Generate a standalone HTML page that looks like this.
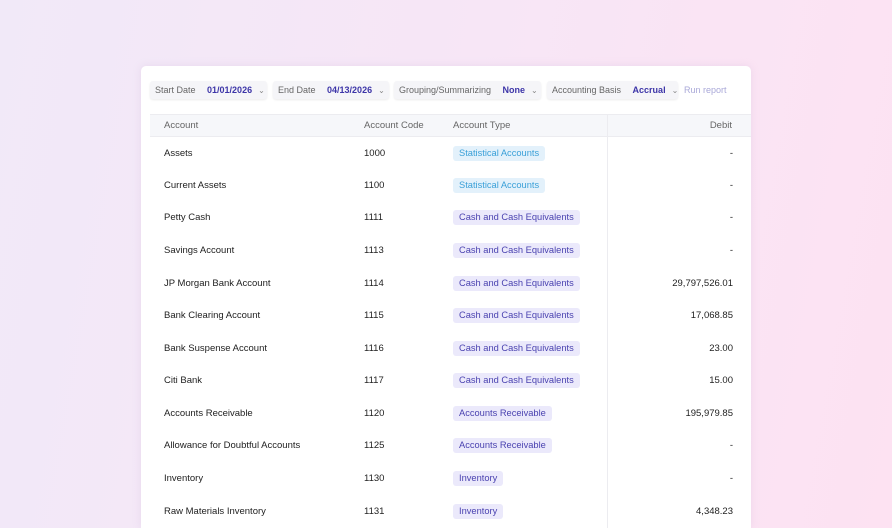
<!DOCTYPE html>
<html><head><style>
*{margin:0;padding:0;box-sizing:border-box}
html,body{width:892px;height:528px;overflow:hidden}
body{font-family:"Liberation Sans",sans-serif;background:linear-gradient(100deg,#f1e9f8 0%,#f7e6f6 50%,#fde2f2 100%);position:relative}
.card{position:absolute;left:141px;top:66px;width:610px;height:462px;background:#fff;border-radius:5px 5px 0 0;box-shadow:0 0 8px rgba(200,170,210,.25)}
.f{position:absolute;top:81px;height:18px;background:#f5f5f8;border-radius:3px;font-size:9px;color:#666;line-height:18px;padding-left:5px;white-space:nowrap;box-shadow:0 1px 2px rgba(0,0,0,.08)}
.f b{color:#3d35a8;font-weight:bold;margin-left:9px}
.f i{font-style:normal;color:#888;margin-left:6px;font-size:8px}
.run{position:absolute;left:684px;top:81px;line-height:18px;font-size:9px;color:#a9a8d8;white-space:nowrap}
.hd{position:absolute;left:150px;top:114px;width:601px;height:23px;background:#f6f7fa;border-top:1px solid #ececf0;border-bottom:1px solid #ececf0}
.vl{position:absolute;left:607px;top:114px;width:1px;height:420px;background:#ececf0}
.t{position:absolute;font-size:9.5px;color:#222;white-space:nowrap}
.h{color:#666;top:120px}
.bd{position:absolute;left:453px;height:15px;line-height:15px;padding:0 6px;border-radius:3px;font-size:9.3px;background:#ebe9fb;color:#4a42b0;white-space:nowrap}
.bd.s{background:#e3f1fb;color:#3aa0d8}
.num{position:absolute;right:159px;font-size:9.5px;color:#222}
</style></head><body>
<div class="card"></div>
<div class="f" style="left:150px;width:117px">Start Date <b>01/01/2026</b><i>⌄</i></div>
<div class="f" style="left:273px;width:116px">End Date <b>04/13/2026</b><i>⌄</i></div>
<div class="f" style="left:394px;width:147px">Grouping/Summarizing <b>None</b><i>⌄</i></div>
<div class="f" style="left:547px;width:131px">Accounting Basis <b>Accrual</b><i>⌄</i></div>
<div class="run">Run report</div>
<div class="hd"></div>
<div class="vl"></div>
<div class="t h" style="left:164px">Account</div>
<div class="t h" style="left:364px">Account Code</div>
<div class="t h" style="left:453px">Account Type</div>
<div class="t h" style="right:160px">Debit</div>
<div class="t" style="left:164px;top:148px">Assets</div><div class="t" style="left:364px;top:148px">1000</div><div class="bd s" style="top:146px">Statistical Accounts</div><div class="num" style="top:148px">-</div>
<div class="t" style="left:164px;top:180px">Current Assets</div><div class="t" style="left:364px;top:180px">1100</div><div class="bd s" style="top:178px">Statistical Accounts</div><div class="num" style="top:180px">-</div>
<div class="t" style="left:164px;top:212px">Petty Cash</div><div class="t" style="left:364px;top:212px">1111</div><div class="bd" style="top:210px">Cash and Cash Equivalents</div><div class="num" style="top:212px">-</div>
<div class="t" style="left:164px;top:245px">Savings Account</div><div class="t" style="left:364px;top:245px">1113</div><div class="bd" style="top:243px">Cash and Cash Equivalents</div><div class="num" style="top:245px">-</div>
<div class="t" style="left:164px;top:278px">JP Morgan Bank Account</div><div class="t" style="left:364px;top:278px">1114</div><div class="bd" style="top:276px">Cash and Cash Equivalents</div><div class="num" style="top:278px">29,797,526.01</div>
<div class="t" style="left:164px;top:310px">Bank Clearing Account</div><div class="t" style="left:364px;top:310px">1115</div><div class="bd" style="top:308px">Cash and Cash Equivalents</div><div class="num" style="top:310px">17,068.85</div>
<div class="t" style="left:164px;top:343px">Bank Suspense Account</div><div class="t" style="left:364px;top:343px">1116</div><div class="bd" style="top:341px">Cash and Cash Equivalents</div><div class="num" style="top:343px">23.00</div>
<div class="t" style="left:164px;top:375px">Citi Bank</div><div class="t" style="left:364px;top:375px">1117</div><div class="bd" style="top:373px">Cash and Cash Equivalents</div><div class="num" style="top:375px">15.00</div>
<div class="t" style="left:164px;top:408px">Accounts Receivable</div><div class="t" style="left:364px;top:408px">1120</div><div class="bd" style="top:406px">Accounts Receivable</div><div class="num" style="top:408px">195,979.85</div>
<div class="t" style="left:164px;top:440px">Allowance for Doubtful Accounts</div><div class="t" style="left:364px;top:440px">1125</div><div class="bd" style="top:438px">Accounts Receivable</div><div class="num" style="top:440px">-</div>
<div class="t" style="left:164px;top:473px">Inventory</div><div class="t" style="left:364px;top:473px">1130</div><div class="bd" style="top:471px">Inventory</div><div class="num" style="top:473px">-</div>
<div class="t" style="left:164px;top:506px">Raw Materials Inventory</div><div class="t" style="left:364px;top:506px">1131</div><div class="bd" style="top:504px">Inventory</div><div class="num" style="top:506px">4,348.23</div>
</body></html>
